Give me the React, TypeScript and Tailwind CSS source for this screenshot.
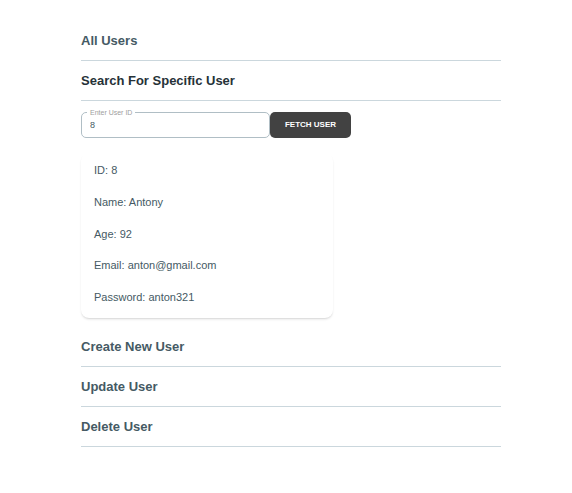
import { useState, type ReactNode } from "react";

type SectionProps = {
  title: string;
  open?: boolean;
  onToggle: () => void;
  children?: ReactNode;
};

function Section({ title, open = false, onToggle, children }: SectionProps) {
  return (
    <section>
      <h2>
        <button
          type="button"
          aria-expanded={open}
          onClick={onToggle}
          className={
            "flex h-10 w-full items-center border-b border-[#cbd7dd] text-left text-[13px] font-bold " +
            (open ? "text-[#263238]" : "text-[#455a64]")
          }
        >
          {title}
        </button>
      </h2>
      {open && children}
    </section>
  );
}

const user = [
  ["ID", "8"],
  ["Name", "Antony"],
  ["Age", "92"],
  ["Email", "anton@gmail.com"],
  ["Password", "anton321"],
];

function SearchPanel() {
  const [id, setId] = useState("8");
  return (
    <div className="pt-[7px] pb-[9px]">
      <form className="flex items-end" onSubmit={(e) => e.preventDefault()}>
        <fieldset className="h-[30px] w-[189px] rounded-[5px] border border-[#b0bec5] text-[#455a64]">
          <legend className="ml-[5px] h-[9px] px-[3px] text-[7px] leading-[9px] text-[#9e9e9e]">
            <label htmlFor="user-id" className="block">Enter User ID</label>
          </legend>
          <input
            id="user-id"
            value={id}
            onChange={(e) => setId(e.target.value)}
            className="block h-4 w-full bg-transparent px-2 text-[9px] outline-none"
          />
        </fieldset>
        <button
          type="submit"
          className="h-[26px] w-[81px] rounded-[5px] bg-[#424242] text-center text-[8px] font-bold text-white uppercase"
        >
          Fetch User
        </button>
      </form>
      <div className="mt-[15px] flex min-h-[165px] w-[252px] flex-col justify-between rounded-lg bg-white px-[13px] pt-[9px] pb-[13px] text-[11px] leading-4 text-[#455a64] shadow-[0_2px_3px_-1px_rgba(0,0,0,0.14),0_1px_2px_-1px_rgba(0,0,0,0.14)]">
        {user.map(([name, value]) => (
          <p key={name}>
            {name}: {value}
          </p>
        ))}
      </div>
    </div>
  );
}

const titles = [
  "All Users",
  "Search For Specific User",
  "Create New User",
  "Update User",
  "Delete User",
];

export default function App() {
  const [open, setOpen] = useState(1);
  return (
    <main className="min-h-screen bg-white pt-[21px] pr-[71px] pl-[81px] font-['Liberation_Sans',Arial,sans-serif]">
      {titles.map((title, i) => (
        <Section
          key={title}
          title={title}
          open={open === i}
          onToggle={() => setOpen(open === i ? -1 : i)}
        >
          {i === 1 && <SearchPanel />}
        </Section>
      ))}
    </main>
  );
}
